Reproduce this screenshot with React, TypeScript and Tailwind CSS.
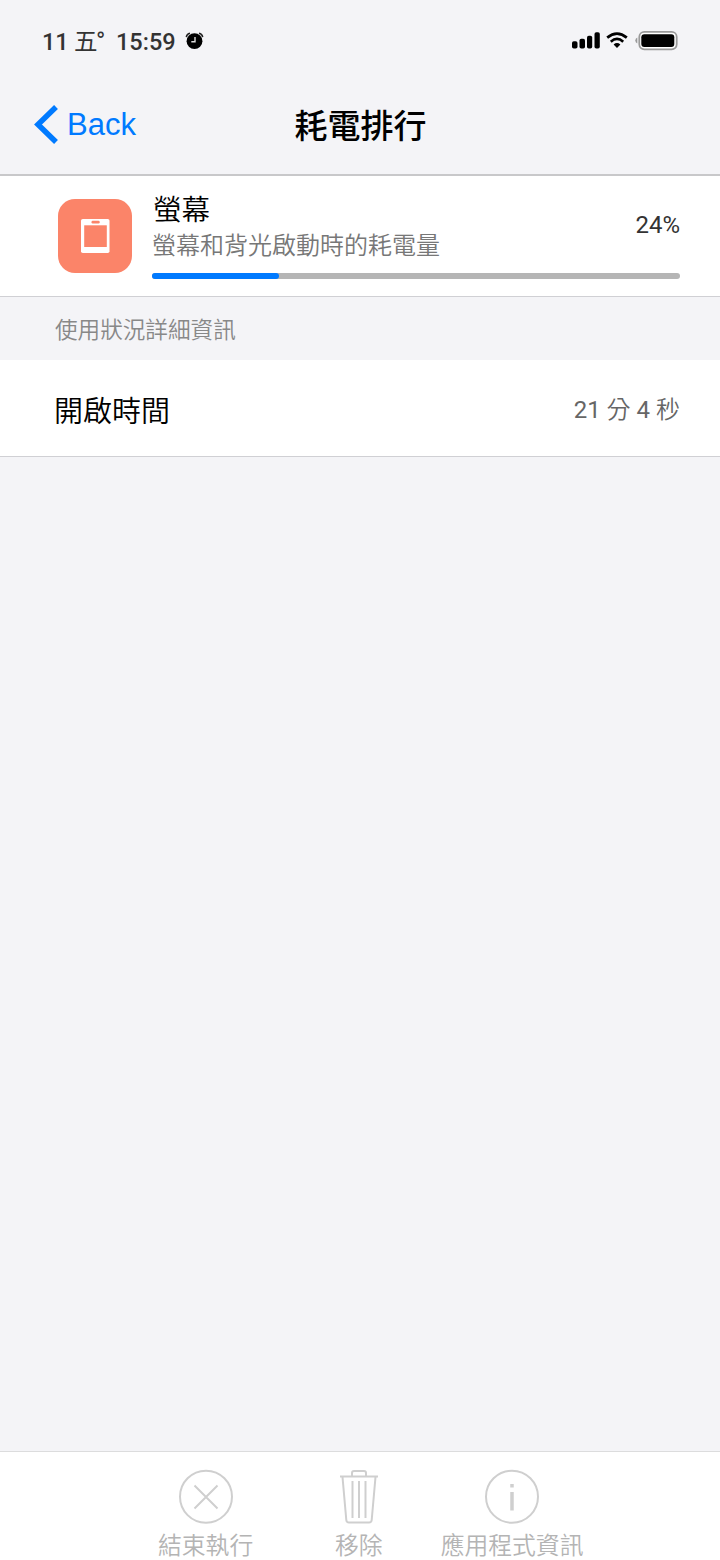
import type { ReactNode } from "react";

const LATIN = "font-['Roboto','Noto_Sans_CJK_TC',sans-serif]";
const CJK = "font-['Noto_Sans_CJK_TC',sans-serif]";

function StatusBar() {
  return (
    <div className="flex h-[82px] items-center justify-between pl-[42px] pr-[42px]">
      <div className={`flex items-center pt-px text-[23.500px] leading-[30px] font-medium text-[#333] ${LATIN}`}>
        <span className="w-[32px]">11</span>
        <span className="w-[22px] font-normal">五</span>
        <span className="w-[20px] text-[25px] font-normal">°</span>
        <span className="w-[69px]">15:59</span>
        <svg className="-mt-px" width="19" height="18" viewBox="0 0 19 18">
          <path d="M1.300 5.200Q1.800 2 5 1.300M17.700 5.200Q17.200 2 14 1.300" stroke="#222" strokeWidth="1.500" fill="none" />
          <circle cx="9.500" cy="9.200" r="7.900" fill="#000" />
          <path d="M10 5V9.700H6.300" stroke="#ddd" strokeWidth="1.400" fill="none" />
        </svg>
      </div>
      <div className="flex items-center">
        <svg width="28" height="18" viewBox="0 0 28 18">
          <rect x="0" y="9.300" width="5.500" height="7.200" rx="1.800" />
          <rect x="7.500" y="6.800" width="5.500" height="9.700" rx="1.800" />
          <rect x="15" y="3.700" width="5.200" height="12.800" rx="1.800" />
          <rect x="22.500" y="0.300" width="5.300" height="16.200" rx="1.800" />
        </svg>
        <svg className="ml-[6px]" width="22" height="18" viewBox="0 0 22 18">
          <path d="M1.200 5.600Q11-2.400 20.800 5.600" stroke="#000" strokeWidth="2.700" fill="none" />
          <path d="M4.800 9.700Q11 4.200 17.200 9.700" stroke="#000" strokeWidth="2.600" fill="none" />
          <path d="M7.600 12.500Q11 9.700 14.400 12.500L11 16.100Z" />
        </svg>
        <svg className="ml-[7px]" width="43" height="20" viewBox="0 0 43 20">
          <path d="M2.300 6.500Q.3 7.300.3 9.500T2.300 12.500Z" fill="#999" />
          <rect x="4.300" y="0.900" width="37.400" height="17.400" rx="5" fill="#fff" stroke="#999" strokeWidth="1.800" />
          <rect x="6.300" y="3.200" width="33" height="12.800" rx="3" />
        </svg>
      </div>
    </div>
  );
}

function NavBar() {
  return (
    <div className="grid h-[92px] grid-cols-3 items-center pb-[8px]">
      <div className="flex items-center pl-[34px] text-[#007aff]">
        <svg width="24" height="39" viewBox="0 0 24 39">
          <path d="M22 2 4 19.500 22 37" stroke="currentColor" strokeWidth="5.500" fill="none" />
        </svg>
        <span className="ml-[9px] pt-[2px] font-['Liberation_Sans',sans-serif] text-[31px] leading-[36px]">Back</span>
      </div>
      <h1 className={`pl-px text-center text-[33px] leading-[40px] font-medium text-black ${CJK}`}>耗電排行</h1>
      <div />
    </div>
  );
}

function UsageCard() {
  return (
    <section className="flex h-[121px] border-b border-[#d0d0d4] bg-white pl-[58px] pr-[40px]">
      <div className="mt-[23px] flex size-[74px] shrink-0 items-center justify-center rounded-[17px] bg-[#fb8469]">
        <svg width="30" height="36" viewBox="0 0 30 36">
          <rect x="1" y="1" width="28.500" height="34" rx="1.800" fill="#fff" />
          <rect x="11.500" y="2.800" width="8.200" height="2.700" rx="1.200" fill="#fb8469" />
          <rect x="4.200" y="7.300" width="22.600" height="21.700" fill="#fb8469" />
        </svg>
      </div>
      <div className="ml-[20px] flex flex-1 flex-col">
        <div className="flex h-[97px] items-center justify-between">
          <div className={`flex flex-col pt-px ${CJK}`}>
            <span className="pl-px text-[28.500px] leading-[36px] font-[350] text-black">螢幕</span>
            <span className="text-[24px] leading-[35px] font-[350] text-[#777]">螢幕和背光啟動時的耗電量</span>
          </div>
          <span className={`text-[24px] leading-[30px] font-[370] text-[#333] ${LATIN}`}>24%</span>
        </div>
        <div className="h-[6px] rounded-full bg-[#b5b5b5]">
          <div className="h-full w-[24.100%] rounded-full bg-[#007aff]" />
        </div>
      </div>
    </section>
  );
}

function Action({ label, children }: { label: string; children: ReactNode }) {
  return (
    <div className="flex flex-col items-center">
      <svg width="56" height="56" viewBox="0 0 56 56" fill="none" stroke="#cfcfcf" strokeWidth="2">
        {children}
      </svg>
      <span className={`mt-[5px] text-[23.800px] leading-[28px] font-[350] text-[#b4b4b4] ${CJK}`}>{label}</span>
    </div>
  );
}

function Toolbar() {
  return (
    <footer className="flex h-[109px] items-start border-t border-[#dcdcdd] bg-white pt-[17px] pl-[158px]">
      <Action label="結束執行">
        <circle cx="28" cy="27.700" r="26" />
        <path d="M16.500 16.500 39.500 39.500M39.500 16.500 16.500 39.500" />
      </Action>
      <div className="ml-[77.500px]">
        <Action label="移除">
          <path d="M9 7.500H47M21 7V4Q21 2 23 2H33Q35 2 35 4V7M11.500 8 15.300 51Q15.500 53.500 18 53.500H38Q40.500 53.500 40.700 51L44.500 8M21.500 12V49M28 12V49M34.500 12V49" />
        </Action>
      </div>
      <div className="ml-[54px]">
        <Action label="應用程式資訊">
          <circle cx="28" cy="27.700" r="26" />
          <path d="M28 15V18.500M28 23V41.500" strokeWidth="3.500" />
        </Action>
      </div>
    </footer>
  );
}

export default function App() {
  return (
    <div className="flex h-[1560px] w-[720px] flex-col overflow-hidden bg-[#f4f4f7]">
      <header className="h-[176px] border-b-2 border-[#c8c8ca]">
        <StatusBar />
        <NavBar />
      </header>
      <UsageCard />
      <h2 className={`flex h-[63px] items-center pl-[55px] text-[22.600px] font-[350] text-[#888] ${CJK}`}>使用狀況詳細資訊</h2>
      <div className="flex h-[97px] items-center justify-between border-b border-[#d0d0d4] bg-white pt-[2px] pl-[54px] pr-[40px]">
        <span className={`text-[29px] leading-[40px] font-[350] text-black ${CJK}`}>開啟時間</span>
        <span className={`pt-[2px] text-[24px] leading-[30px] font-[370] text-[#666] ${LATIN}`}>
          21 <span className="font-[350]">分</span> 4 <span className="font-[350]">秒</span>
        </span>
      </div>
      <main className="flex-1" />
      <Toolbar />
    </div>
  );
}
